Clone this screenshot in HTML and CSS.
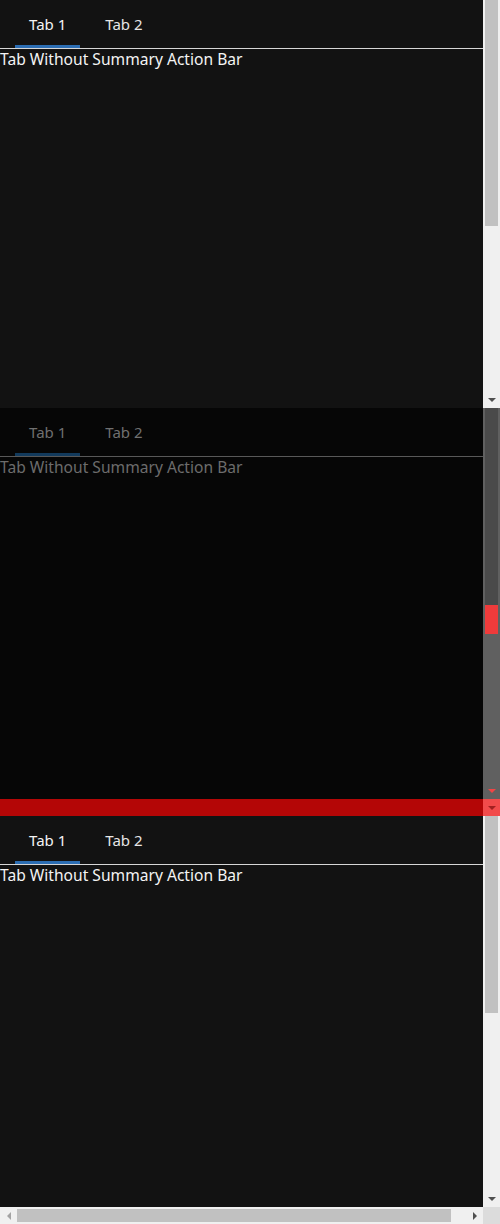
FILE: index.html
```html
<!DOCTYPE html>
<html>
<head>
<meta charset="utf-8">
<link rel="stylesheet" href="styles.css">
</head>
<body>
<div class="page">
  <section class="frame frame-a">
    <div class="content">
      <div class="tabs">
        <div class="tab active">Tab 1</div>
        <div class="tab">Tab 2</div>
      </div>
      <div class="body-text">Tab Without Summary Action Bar</div>
    </div>
    <div class="vscroll">
      <div class="thumb thumb-a"></div>
      <div class="spacer"></div>
      <div class="arrow-btn"><span class="tri-down"></span></div>
    </div>
  </section>

  <section class="frame frame-b dim">
    <div class="content">
      <div class="tabs">
        <div class="tab active">Tab 1</div>
        <div class="tab">Tab 2</div>
      </div>
      <div class="body-text">Tab Without Summary Action Bar</div>
    </div>
    <div class="vscroll vscroll-dim">
      <div class="dim-thumb"></div>
      <div class="red-thumb"></div>
      <div class="spacer"></div>
      <div class="arrow-btn"><span class="tri-down tri-red"></span></div>
    </div>
  </section>

  <div class="redbar">
    <div class="redbar-fill"></div>
    <div class="redbar-btn"><span class="tri-down tri-dark-red"></span></div>
  </div>

  <section class="frame-c">
    <div class="frame frame-inner">
      <div class="content">
        <div class="tabs">
          <div class="tab active">Tab 1</div>
          <div class="tab">Tab 2</div>
        </div>
        <div class="body-text">Tab Without Summary Action Bar</div>
      </div>
      <div class="vscroll">
        <div class="thumb thumb-c"></div>
        <div class="spacer"></div>
        <div class="arrow-btn"><span class="tri-down"></span></div>
      </div>
    </div>
    <div class="hscroll">
      <div class="harrow"><span class="tri-left"></span></div>
      <div class="hthumb"></div>
      <div class="hspacer"></div>
      <div class="harrow"><span class="tri-right"></span></div>
      <div class="corner"></div>
    </div>
  </section>
</div>
</body>
</html>
```

FILE: styles.css
```css
html, body {
  margin: 0;
  padding: 0;
  background: #121212;
}

.page {
  width: 500px;
  height: 1224px;
  display: flex;
  flex-direction: column;
  overflow: hidden;
  font-family: "Noto Sans", "Open Sans", sans-serif;
  font-size: 15px;
}

.frame {
  display: flex;
  flex-direction: row;
  background: #121212;
}

.frame-a { height: 408px; }
.frame-b { height: 391px; background: #060606; }

.content {
  flex: 1;
  min-width: 0;
  color: #f2f2f2;
}

.tabs {
  height: 48px;
  border-bottom: 1px solid #d6d6d6;
  display: flex;
  gap: 11px;
  padding-left: 15px;
  box-sizing: content-box;
}

.tab {
  padding: 14px 14px 0 14px;
  box-sizing: border-box;
  height: 48px;
  border-bottom: 3px solid transparent;
  color: #e6e6e6;
}

.tab.active {
  border-bottom-color: #2b6db3;
  color: #f4f4f4;
}

.body-text {
  color: #f4f4f4;
  font-size: 15.6px;
  line-height: 20px;
}

/* dimmed frame */
.dim .content { color: #707070; }
.dim .tabs { border-bottom-color: #585858; }
.dim .tab { color: #707070; }
.dim .tab.active { border-bottom-color: #123a5c; color: #707070; }
.dim .body-text { color: #6c6c6c; }

/* vertical scrollbar */
.vscroll {
  width: 17px;
  flex: 0 0 17px;
  background: #f0f0f0;
  display: flex;
  flex-direction: column;
}

.thumb {
  margin: 0 2px;
  background: #c1c1c1;
}
.thumb-a { height: 226px; }
.thumb-c { height: 197px; }

.spacer { flex: 1; }

.arrow-btn {
  height: 17px;
  display: flex;
  align-items: center;
  justify-content: center;
}

.tri-down {
  width: 0;
  height: 0;
  border-left: 4px solid transparent;
  border-right: 4px solid transparent;
  border-top: 4px solid #505050;
  margin-top: 1px;
}

.tri-left {
  width: 0;
  height: 0;
  border-top: 4px solid transparent;
  border-bottom: 4px solid transparent;
  border-right: 4px solid #a3a3a3;
}

.tri-right {
  width: 0;
  height: 0;
  border-top: 4px solid transparent;
  border-bottom: 4px solid transparent;
  border-left: 4px solid #505050;
}

/* dimmed scrollbar */
.vscroll-dim {
  background: #606060;
}
.dim-thumb {
  margin: 0 2px;
  height: 197px;
  background: #4a4a4a;
}
.red-thumb {
  margin: 0 2px;
  height: 29px;
  background: #ef3b3b;
}
.tri-red { border-top-color: #f04545; }

/* red bar */
.redbar {
  height: 17px;
  display: flex;
}
.redbar-fill {
  flex: 1;
  background: #b40606;
}
.redbar-btn {
  width: 17px;
  background: #f24b4b;
  display: flex;
  align-items: center;
  justify-content: center;
}
.tri-dark-red { border-top-color: #a22020; }

/* frame c */
.frame-c {
  height: 408px;
  display: flex;
  flex-direction: column;
}
.frame-inner {
  flex: 1;
}

.hscroll {
  height: 17px;
  display: flex;
  background: #f0f0f0;
}
.harrow {
  width: 17px;
  display: flex;
  align-items: center;
  justify-content: center;
}
.hthumb {
  width: 434px;
  margin: 2px 0;
  background: #c1c1c1;
}
.hspacer { flex: 1; }
.corner {
  width: 17px;
  background: #dcdcdc;
}
```
